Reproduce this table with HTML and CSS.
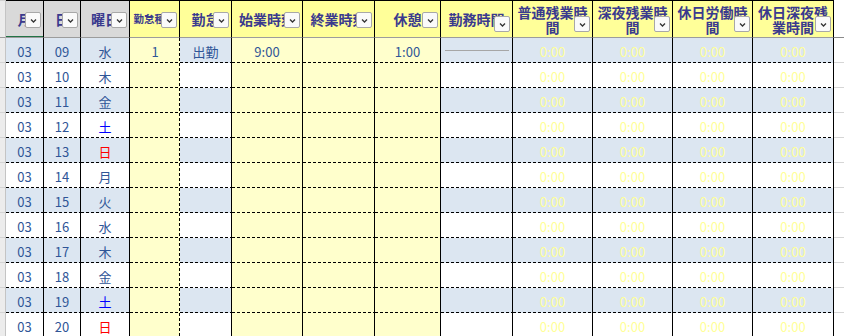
FILE: index.html
```html
<!DOCTYPE html>
<html lang="ja">
<head>
<meta charset="utf-8">
<title>勤怠表</title>
<link rel="stylesheet" href="styles.css">
</head>
<body>
<div class="sheet">
  <div class="row head">
    <div class="c strip"></div>
    <div class="c h gray sel"><span class="t">月</span><span class="dd"><svg viewBox="0 0 13 13"><path d="M4 5.5 L6.5 8 L9 5.5"/></svg></span></div>
    <div class="c h gray"><span class="t">日</span><span class="dd"><svg viewBox="0 0 13 13"><path d="M4 5.5 L6.5 8 L9 5.5"/></svg></span></div>
    <div class="c h gray"><span class="t">曜日</span><span class="dd"><svg viewBox="0 0 13 13"><path d="M4 5.5 L6.5 8 L9 5.5"/></svg></span></div>
    <div class="c h yel"><span class="t small">勤怠種別</span><span class="dd"><svg viewBox="0 0 13 13"><path d="M4 5.5 L6.5 8 L9 5.5"/></svg></span></div>
    <div class="c h yel"><span class="t">勤怠</span><span class="dd"><svg viewBox="0 0 13 13"><path d="M4 5.5 L6.5 8 L9 5.5"/></svg></span></div>
    <div class="c h yel"><span class="t">始業時刻</span><span class="dd"><svg viewBox="0 0 13 13"><path d="M4 5.5 L6.5 8 L9 5.5"/></svg></span></div>
    <div class="c h yel"><span class="t">終業時刻</span><span class="dd"><svg viewBox="0 0 13 13"><path d="M4 5.5 L6.5 8 L9 5.5"/></svg></span></div>
    <div class="c h yel"><span class="t">休憩</span><span class="dd"><svg viewBox="0 0 13 13"><path d="M4 5.5 L6.5 8 L9 5.5"/></svg></span></div>
    <div class="c h yel"><span class="t">勤務時間</span><span class="dd low"><svg viewBox="0 0 13 13"><path d="M4 5.5 L6.5 8 L9 5.5"/></svg></span></div>
    <div class="c h yel"><span class="t wrap">普通残業時間</span><span class="dd low"><svg viewBox="0 0 13 13"><path d="M4 5.5 L6.5 8 L9 5.5"/></svg></span></div>
    <div class="c h yel"><span class="t wrap">深夜残業時間</span><span class="dd low"><svg viewBox="0 0 13 13"><path d="M4 5.5 L6.5 8 L9 5.5"/></svg></span></div>
    <div class="c h yel"><span class="t wrap">休日労働時間</span><span class="dd low"><svg viewBox="0 0 13 13"><path d="M4 5.5 L6.5 8 L9 5.5"/></svg></span></div>
    <div class="c h yel"><span class="t wrap">休日深夜残業時間</span><span class="dd low"><svg viewBox="0 0 13 13"><path d="M4 5.5 L6.5 8 L9 5.5"/></svg></span></div>
    <div class="c rest"></div>
  </div>
</div>
<script src="rows.js"></script>
</body>
</html>
```

FILE: rows.js
```js
(function () {
  var days = [
    ["09", "水", ""], ["10", "木", ""], ["11", "金", ""], ["12", "土", "sat"],
    ["13", "日", "sun"], ["14", "月", ""], ["15", "火", ""], ["16", "水", ""],
    ["17", "木", ""], ["18", "金", ""], ["19", "土", "sat"], ["20", "日", "sun"]
  ];
  var sheet = document.querySelector(".sheet");
  days.forEach(function (d, i) {
    var first = i === 0;
    var row = document.createElement("div");
    row.className = "row d" + (i % 2 === 0 ? " alt" : "");
    var html = '<div class="c strip"></div>' +
      '<div class="c k">03</div>' +
      '<div class="c k">' + d[0] + '</div>' +
      '<div class="c k ' + d[2] + '">' + d[1] + '</div>' +
      '<div class="c in dash">' + (first ? "1" : "") + '</div>' +
      '<div class="c k">' + (first ? "出勤" : "") + '</div>' +
      '<div class="c in">' + (first ? "9:00" : "") + '</div>' +
      '<div class="c in"></div>' +
      '<div class="c in">' + (first ? "1:00" : "") + '</div>' +
      '<div class="c k">' + (first ? '<span class="bar"></span>' : "") + '</div>' +
      '<div class="c k z">0:00</div>' +
      '<div class="c k z">0:00</div>' +
      '<div class="c k z">0:00</div>' +
      '<div class="c k z">0:00</div>' +
      '<div class="c rest"></div>';
    row.innerHTML = html;
    sheet.appendChild(row);
  });
})();
```

FILE: styles.css
```css
* { box-sizing: border-box; }
html, body { margin: 0; padding: 0; background: #fff; }
body {
  width: 844px;
  height: 336px;
  overflow: hidden;
  font-family: "Noto Sans CJK JP", "Noto Sans", sans-serif;
}
.sheet { width: 844px; }
.row {
  display: grid;
  grid-template-columns: 6px 38px 37px 49px 50px 52px 71px 72px 66px 72px 80px 80px 80px 81px 10px;
}
.c {
  position: relative;
  overflow: hidden;
  border-right: 1px solid #000;
  display: flex;
  align-items: center;
  justify-content: center;
  white-space: nowrap;
}
.c.strip {
  background: #ececec;
  border-right: 1px solid #c4c4c4;
}
.c.rest { border-right: none; background: #fff; }

/* header */
.head { height: 38px; }
.head .c {
  border-top: 1px solid #000;
  border-bottom: 1px solid #9c9c9c;
}
.head .c.strip { border-top: 1px solid #d0d0d0; }
.head .c.rest { border-top: none; border-bottom: 1px solid #8a8a8a; }
.h {
  color: #3a3a8e;
  font-weight: 700;
  font-size: 14px;
  line-height: 14px;
}
.h.gray { background: #d9d9d9; }
.h.yel { background: #ffff99; }
.h.sel { box-shadow: inset 0 -1px 0 #217346; }
.h .t { display: block; text-align: center; }
.h .t.small { font-size: 10.5px; }
.h .t.wrap { white-space: normal; width: 74px; line-height: 14.5px; padding-top: 1px; }
.dd {
  position: absolute;
  right: 2px;
  top: 11px;
  width: 16px;
  height: 16px;
  background: #fafafa;
  border: 1px solid #a8a8a8;
  border-radius: 2px;
  display: flex;
  align-items: center;
  justify-content: center;
}
.dd.low { top: 15px; }
.dd svg { width: 13px; height: 13px; }
.dd path { fill: none; stroke: #333; stroke-width: 1.3; }

/* data rows */
.d { height: 25px; }
.d .c {
  --bg: #fff;
  font-size: 13px;
  color: #2f5597;
  padding-top: 1px;
  background-color: var(--bg);
  background-image: repeating-linear-gradient(to right, #000 0 3px, transparent 3px 5px);
  background-size: 100% 1px;
  background-position: left bottom;
  background-repeat: no-repeat;
}
.d .c.strip {
  background-image: none;
  background-color: #ececec;
  border-bottom: 1px solid #d4d4d4;
}
.d .c.rest {
  background-image: none;
  border-bottom: 1px solid #d6d6d6;
}
.d.alt .c.k { --bg: #dce6f1; }
.d .c.in { --bg: #ffffcc; }
.d .c.dash {
  border-right: none;
  background-image:
    repeating-linear-gradient(to right, #000 0 3px, transparent 3px 5px),
    repeating-linear-gradient(to bottom, #000 0 3px, transparent 3px 5px);
  background-size: 100% 1px, 1px 100%;
  background-position: left bottom, right top;
  background-repeat: no-repeat, no-repeat;
}
.d .c.sat { color: #0000ff; }
.d .c.sun { color: #ff0000; }
.d .c.z { color: #ffff99; }
.bar {
  display: block;
  width: 64px;
  height: 1px;
  background: #a6a6a6;
  margin-top: -1px;
}
```
